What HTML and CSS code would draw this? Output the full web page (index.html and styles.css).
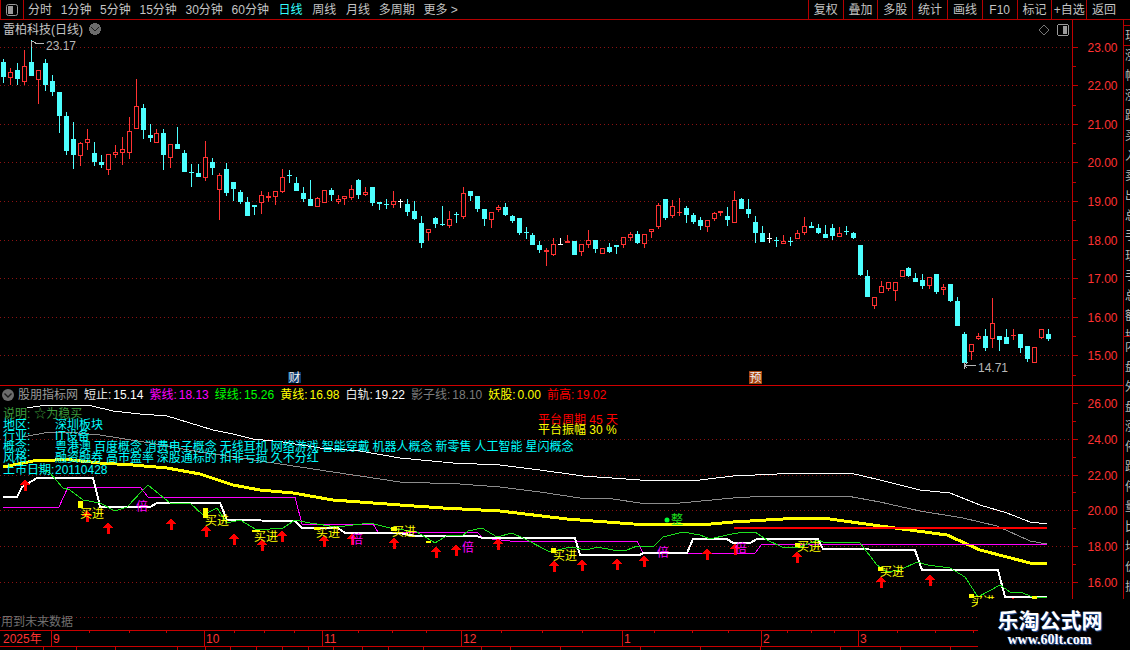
FILE: index.html
```html
<!DOCTYPE html>
<html lang="zh">
<head>
<meta charset="utf-8">
<title>雷柏科技(日线)</title>
<link rel="stylesheet" href="styles.css">
</head>
<body>
<div class="page">
  <header class="toolbar">
    <div class="panel-btn">
      <svg class="ico" viewBox="0 0 14 14"><rect class="ico-box" x="1.5" y="1.5" width="11" height="11" rx="2"/><rect class="ico-fill" x="3" y="3" width="5" height="8"/></svg>
    </div>
    <nav class="tabs">
      <span>分时</span><span>1分钟</span><span>5分钟</span><span>15分钟</span><span>30分钟</span><span>60分钟</span>
      <span class="tab-on">日线</span><span class="tab-w">周线</span><span class="tab-w">月线</span><span>多周期</span><span>更多&nbsp;&gt;</span>
    </nav>
    <div class="tools">
      <span>复权</span><span>叠加</span><span>多股</span><span>统计</span><span>画线</span><span>F10</span><span>标记</span><span>+自选</span><span>返回</span>
    </div>
  </header>

  <main class="board">
    <section class="pane price-pane">
      <svg class="chart" width="1072" height="366" viewBox="0 20 1072 366">
        <g class="grid">
          <line x1="0" x2="1072" y1="47.5" y2="47.5"/><line x1="0" x2="1072" y1="85.5" y2="85.5"/><line x1="0" x2="1072" y1="124.5" y2="124.5"/><line x1="0" x2="1072" y1="162.5" y2="162.5"/><line x1="0" x2="1072" y1="201.5" y2="201.5"/><line x1="0" x2="1072" y1="240.5" y2="240.5"/><line x1="0" x2="1072" y1="278.5" y2="278.5"/><line x1="0" x2="1072" y1="317.5" y2="317.5"/><line x1="0" x2="1072" y1="355.5" y2="355.5"/>
        </g>
        <g id="candles"></g>
        <path class="note-line" d="M31.5 47V41.5H34M34 42l3 2 3-1 4 1"/>
        <text class="note" x="46" y="49.5">23.17</text>
        <path class="note-line" d="M964.5 362V369M964.5 365.5H976M964.5 365.5l3-3M964.5 365.5l3 3"/>
        <text class="note" x="978" y="371.5">14.71</text>
        <rect class="tag-cai" x="288" y="372" width="13" height="11"/>
        <text class="tag-text" x="288.500" y="382">财</text>
        <rect class="tag-yu" x="749" y="371" width="13" height="13"/>
        <text class="tag-text" x="749.500" y="382">预</text>
        <path class="rule" d="M0 385.5H1072"/>
        <circle class="chev-bg" cx="95" cy="29" r="6"/>
        <path class="chev" d="M91.500 27.500l3.500 3.500 3.500-3.500"/>
        <path class="diamond" d="M1044 25l5 5-5 5-5-5z"/>
        <rect class="ico-box" x="1057.500" y="24.500" width="11" height="11" rx="2"/>
        <rect class="ico-fill" x="1063" y="26" width="4" height="8"/>
      </svg>
      <div class="stock-title">雷柏科技(日线)</div>
    </section>

    <aside class="axis price-axis">
      <svg width="51" height="366" viewBox="1072 20 51 366">
        <path class="axis-line" d="M1072.500 20V386M1072 47.500h6M1072 66.500h4M1072 85.500h6M1072 105.500h4M1072 124.500h6M1072 143.500h4M1072 162.500h6M1072 182.500h4M1072 201.500h6M1072 220.500h4M1072 240.500h6M1072 259.500h4M1072 278.500h6M1072 298.500h4M1072 317.500h6M1072 336.500h4M1072 355.500h6M1072 375.500h4"/>
        <text class="axis-text" x="1087.500" y="52">23.00</text>
        <text class="axis-text" x="1087.500" y="90">22.00</text>
        <text class="axis-text" x="1087.500" y="129">21.00</text>
        <text class="axis-text" x="1087.500" y="167">20.00</text>
        <text class="axis-text" x="1087.500" y="206">19.00</text>
        <text class="axis-text" x="1087.500" y="245">18.00</text>
        <text class="axis-text" x="1087.500" y="283">17.00</text>
        <text class="axis-text" x="1087.500" y="322">16.00</text>
        <text class="axis-text" x="1087.500" y="360">15.00</text>
        <path class="rule" d="M1072 385.500H1123"/>
      </svg>
    </aside>

    <aside class="side">
      <div class="side-a"></div>
      <div class="side-b"><p>现价</p></div>
      <div class="side-c"><p>涨幅涨跌买入卖出总手现手总额换手今开最高最低昨收市盈</p></div>
      <div class="side-d"><p>内盘外盘涨停跌停量比均价振幅金额</p></div>
    </aside>

    <section class="pane index-pane">
      <svg class="chart" width="1072" height="244" viewBox="0 386 1072 244">
        <defs><path id="up" d="M0 0L5 6H1.500V12H-1.500V6H-5Z"/></defs>
        <g class="grid">
          <line x1="0" x2="1072" y1="439.5" y2="439.5"/><line x1="0" x2="1072" y1="475.5" y2="475.5"/><line x1="0" x2="1072" y1="510.5" y2="510.5"/><line x1="0" x2="1072" y1="546.5" y2="546.5"/><line x1="0" x2="1072" y1="582.5" y2="582.5"/><line x1="0" x2="1072" y1="617.5" y2="617.5"/>
        </g>
        <polyline class="ln white-thin" points="27,408 40,406 72,405.500 92,406 113,411 140,414 167,416 190,423 213,430 233,434 253,439 283,442 320,448 360,451 400,458 453,463 500,465 540,470 583,476 640,480 700,480 733,476 800,473 850,473 880,480 920,490 950,493 980,505 1007,513 1030,522 1047,524"/>
        <polyline class="ln grey" points="22,437 50,432 67,432 100,435 150,443 200,452 267,462 333,472 400,482 460,484 500,487 540,492 580,498 613,499 640,503 680,503 733,498 767,496 847,496 880,502 920,511 963,518 997,526 1030,541 1047,544"/>
        <polyline class="ln yellow" points="3,467 13,465 33,461 67,459.500 100,463 133,465 167,468 200,474 233,485 260,490 293,493 333,500 400,505 443,508 500,511 567,519 633,524 700,525 733,522 800,518 830,519 880,526 947,535 980,550 1030,563 1047,564"/>
        <polyline class="ln magenta" points="3,507 59,507 68,487 140,487 148,497 295,497 302,524 373,524 378,532 477,532 483,538 510,541 637,541 643,553 755,553 762,544 1047,544"/>
        <polyline class="ln white" points="3,497 17,497 22,487 37,478 93,478 98,498 100,507 150,507 157,503 220,503 227,520 295,521 302,528 338,528 345,533 400,533 415,536 477,536 482,538 575,538 580,555 640,555 643,553 687,553 693,539 727,539 733,543 750,543 757,539 818,539 823,549 915,550 922,570 998,570 1005,597 1047,597"/>
        <polyline class="ln green" points="38,467 50,473 63,488 70,490 83,500 100,503 115,511 127,507 143,490 148,485 170,503 190,503 203,515 217,508 227,523 240,520 257,530 283,528 295,520 310,523 337,527 370,523 390,528 417,532 435,543 448,535 462,536 468,531 482,528 497,537 512,533 523,538 550,552 570,547 587,550 597,547 613,550 627,550 637,546 653,547 663,537 683,532 700,535 710,539 727,535 743,532 755,532 767,540 782,547 800,547 818,540 823,542 860,543 877,565 887,572 900,570 917,562 928,565 950,568 965,577 978,597 1000,585 1010,592 1020,592 1033,597 1047,597"/>
        <path class="ln red-bar" d="M734 528H1047"/>
        <g class="arrows">
          <use href="#up" x="25" y="479"/><use href="#up" x="87" y="510"/><use href="#up" x="108" y="522"/><use href="#up" x="171" y="518"/><use href="#up" x="206" y="525"/><use href="#up" x="234" y="533"/><use href="#up" x="262" y="539"/><use href="#up" x="282" y="530"/><use href="#up" x="324" y="535"/><use href="#up" x="352" y="533"/><use href="#up" x="394" y="537"/><use href="#up" x="436" y="546"/><use href="#up" x="456" y="544"/><use href="#up" x="498" y="538"/><use href="#up" x="554" y="560"/><use href="#up" x="582" y="559"/><use href="#up" x="617" y="558"/><use href="#up" x="644" y="555"/><use href="#up" x="707" y="548"/><use href="#up" x="735" y="543"/><use href="#up" x="797" y="551"/><use href="#up" x="881" y="576"/><use href="#up" x="930" y="574"/><use href="#up" x="1013" y="597"/>
        </g>
        <g class="blocks">
          <rect x="78" y="501" width="5" height="7"/><rect x="203" y="508" width="5" height="10"/><rect x="252" y="530" width="8" height="2"/><rect x="314" y="527" width="6" height="3"/><rect x="391" y="527" width="6" height="4"/><rect x="426" y="541" width="5" height="2"/><rect x="551" y="548" width="5" height="5"/><rect x="795" y="543" width="5" height="4"/><rect x="878" y="567" width="5" height="4"/><rect x="969" y="594" width="5" height="4"/><rect x="1032" y="596" width="5" height="3"/>
        </g>
        <g class="buy">
          <text x="80" y="518">买进</text><text x="205" y="525">买进</text><text x="254" y="541">买进</text><text x="316" y="537">买进</text><text x="392" y="536">买进</text><text x="553" y="560">买进</text><text x="797" y="551">买进</text><text x="880" y="576">买进</text><text x="971" y="606">买进</text>
        </g>
        <g class="bei">
          <text x="136" y="511">倍</text><text x="351" y="544">倍</text><text x="462" y="552">倍</text><text x="657" y="557">倍</text><text x="735" y="553">倍</text>
        </g>
        <circle class="dot" cx="667" cy="520" r="2.500"/>
        <text class="dot-text" x="671" y="524">整</text>
      </svg>

      <div class="legend">
        <svg class="legend-chev" viewBox="0 0 12 12"><circle class="chev-bg" cx="6" cy="6" r="6"/><path class="chev" d="M2.500 4.500l3.500 3.500 3.500-3.500"/></svg>
        <span class="c-name">股朋指标网</span>
        <span class="c-white"><i class="c-soft">短止:</i>15.14</span>
        <span class="c-mag">紫线:<b>18.13</b></span>
        <span class="c-green">绿线:<b>15.26</b></span>
        <span class="c-yellow">黄线:<b>16.98</b></span>
        <span class="c-white"><i class="c-soft">白轨:</i>19.22</span>
        <span class="c-grey">影子线:<b>18.10</b></span>
        <span class="c-yellow">妖股:<b>0.00</b></span>
        <span class="c-red">前高:<b>19.02</b></span>
      </div>

      <div class="info">
        <div class="info-note">说明: <span>☆为稳买</span></div>
        <div class="info-row"><span>地区:</span><span>深圳板块</span></div>
        <div class="info-row"><span>行业:</span><span>IT设备</span></div>
        <div class="info-row"><span>概念:</span><span>粤港澳 百度概念 消费电子概念 无线耳机 网络游戏 智能穿戴 机器人概念 新零售 人工智能 星闪概念</span></div>
        <div class="info-row"><span>风格:</span><span>融资融券 高市盈率 深股通标的 扣非亏损 久不分红</span></div>
        <div class="info-row"><span>上市日期:</span><span>20110428</span></div>
      </div>

      <div class="platform">
        <div class="c-red">平台周期 45 天</div>
        <div class="c-yellow">平台振幅 30 %</div>
      </div>

      <div class="future">用到未来数据</div>
    </section>

    <aside class="axis index-axis">
      <svg width="51" height="244" viewBox="1072 386 51 244">
        <path class="axis-line" d="M1072.500 386V630M1072 403.500h6M1072 421.500h4M1072 439.500h6M1072 457.500h4M1072 475.500h6M1072 492.500h4M1072 510.500h6M1072 528.500h4M1072 546.500h6M1072 564.500h4M1072 582.500h6"/>
        <text class="axis-text" x="1087.500" y="408">26.00</text>
        <text class="axis-text" x="1087.500" y="444">24.00</text>
        <text class="axis-text" x="1087.500" y="480">22.00</text>
        <text class="axis-text" x="1087.500" y="515">20.00</text>
        <text class="axis-text" x="1087.500" y="551">18.00</text>
        <text class="axis-text" x="1087.500" y="587">16.00</text>
      </svg>
    </aside>
  </main>

  <footer class="dates">
    <svg width="1130" height="20" viewBox="0 630 1130 20">
      <path class="date-line" d="M0 630.500H1130M0 646.500H1130"/>
      <path class="date-line" d="M51.500 630V646M204.500 630V646M322.500 630V646M461.500 630V646M622.500 630V646M761.500 630V646M858.500 630V646"/>
      <path class="date-line" d="M89.500 630v3M129.500 630v3M166.500 630v3M234.500 630v3M264.500 630v3M294.500 630v3M358.500 630v3M392.500 630v3M426.500 630v3M501.500 630v3M542.500 630v3M582.500 630v3M654.500 630v3M692.500 630v3M728.500 630v3M787.500 630v3M811.500 630v3M834.500 630v3M897.500 630v3M935.500 630v3M973.500 630v3"/>
      <path class="date-line" d="M43.500 646v4M76.500 646v4M115.500 646v4M177.500 646v4M205.500 646v4M230.500 646v4M256.500 646v4M282.500 646v4M308.500 646v4M333.500 646v4M362.500 646v4M388.500 646v4M423.500 646v4M481.500 646v4M510.500 646v4M560.500 646v4M640.500 646v4M700.500 646v4M760.500 646v4M840.500 646v4M900.500 646v4M950.500 646v4"/>
      <text class="date-text" x="3" y="643">2025年</text>
      <text class="date-text" x="53" y="643">9</text>
      <text class="date-text" x="206" y="643">10</text>
      <text class="date-text" x="324" y="643">11</text>
      <text class="date-text" x="463" y="643">12</text>
      <text class="date-text" x="624" y="643">1</text>
      <text class="date-text" x="763" y="643">2</text>
      <text class="date-text" x="860" y="643">3</text>
    </svg>
  </footer>

  <div class="watermark">
    <div class="wm-title">乐淘公式网</div>
    <div class="wm-url">www.60lt.com</div>
  </div>
</div>
<script src="chart.js"></script>
</body>
</html>
```

FILE: styles.css
```css
* { box-sizing: border-box; }
html, body { margin: 0; padding: 0; background: #000; }
body { font-family: "Liberation Sans", "Noto Sans CJK SC", sans-serif; font-size: 12px; overflow: hidden; }
svg { display: block; }
svg text { font-family: "Liberation Sans", "Noto Sans CJK SC", sans-serif; font-size: 12px; }

.page { position: relative; width: 1130px; height: 650px; display: flex; flex-direction: column; overflow: hidden; background: #000; }

.toolbar { flex: none; height: 20px; display: flex; align-items: stretch; border-bottom: 1px solid #b40000; color: #c4c4c4; }
.panel-btn { width: 24px; display: flex; align-items: center; justify-content: center; border-left: 1px solid #b40000; border-right: 1px solid #b40000; }
.ico { width: 14px; height: 14px; }
.ico-box { fill: none; stroke: #9a9a9a; }
.ico-fill { fill: #9a9a9a; }
.tabs { display: flex; align-items: center; gap: 8.7px; margin-left: 4px; padding-top: 1px; line-height: 18px; white-space: nowrap; }
.tab-on { color: #3ff; margin-left: 1px; }
.tab-w { margin-left: 1px; }
.tools { margin-left: auto; margin-right: 9px; display: flex; }
.tools span { width: 34.800px; border-left: 1px solid #b40000; text-align: center; line-height: 20px; white-space: nowrap; }

.board { flex: none; display: grid; grid-template-columns: 1072px 51px 7px; grid-template-rows: 366px 244px; }
.pane { position: relative; }
.price-pane { grid-column: 1; grid-row: 1; }
.index-pane { grid-column: 1; grid-row: 2; }
.price-axis { grid-column: 2; grid-row: 1; }
.index-axis { grid-column: 2; grid-row: 2; }

.chart { shape-rendering: crispEdges; }
.chart text { shape-rendering: auto; }
.grid line { stroke: #8c1212; stroke-width: 1; stroke-dasharray: 1 3; }
.axis-line { fill: none; stroke: #c00000; shape-rendering: crispEdges; }
.axis-text { fill: #ff3232; }
.rule { stroke: #d00000; fill: none; shape-rendering: crispEdges; }

.note { fill: #b8b8b8; }
.note-line { fill: none; stroke: #b8b8b8; }
.tag-cai { fill: #0c3a6c; }
.tag-yu { fill: #a8420c; }
.tag-text { fill: #f0f0f0; }
.chev-bg { fill: #6c6c6c; }
.chev { fill: none; stroke: #1c1c1c; stroke-width: 1.400; }
.diamond { fill: none; stroke: #777; shape-rendering: auto; }
.stock-title { position: absolute; left: 3px; top: 2px; line-height: 16px; color: #c4c4c4; white-space: nowrap; }

.ln { fill: none; }
.white-thin { stroke: #fff; stroke-width: 1; }
.grey { stroke: #8c8c8c; stroke-width: 1; }
.yellow { stroke: #ff0; stroke-width: 3; }
.magenta { stroke: #f0f; stroke-width: 1; }
.white { stroke: #fff; stroke-width: 2; }
.green { stroke: #1ee01e; stroke-width: 1; }
.red-bar { stroke: #f00; stroke-width: 2; }
.arrows use { fill: #f00; }
.blocks rect { fill: #ff0; }
.buy text { fill: #ff0; }
.bei text { fill: #f0f; }
.dot { fill: #0f3; shape-rendering: auto; }
.dot-text { fill: #1ee01e; }

.legend { position: absolute; left: 2px; top: 1px; height: 16px; display: flex; align-items: center; gap: 6px; white-space: nowrap; line-height: 16px; }
.legend-chev { width: 12px; height: 12px; margin-right: -2px; }
.legend i { font-style: normal; margin-right: 2px; }
.legend b { font-weight: normal; margin-left: 2px; }
.c-name { color: #9a9a9a; }
.c-white { color: #fff; }
.c-soft { color: #e8e8e8; }
.c-mag { color: #f0f; }
.c-green { color: #0f0; }
.c-yellow { color: #ff0; }
.c-grey { color: #7c7c7c; }
.c-red { color: #f00; }

.info { position: absolute; left: 3px; top: 22.500px; color: #0ff; line-height: 11.200px; white-space: nowrap; word-spacing: -0.4px; }
.info-note { color: #3c9c3c; }
.info-note span { margin-left: 1px; }
.info-row { display: flex; }
.info-row span:first-child { width: 52px; flex: none; }

.platform { position: absolute; left: 538px; top: 30px; line-height: 9.500px; white-space: nowrap; }

.future { position: absolute; left: 1px; bottom: 0; line-height: 16px; color: #707070; white-space: nowrap; }

.side { grid-column: 3; grid-row: 1 / span 2; height: 580px; border-left: 1px solid #b40000; overflow: hidden; color: #b8b8b8; display: flex; flex-direction: column; }
.side div { overflow: hidden; flex: none; border-bottom: 1px solid #b40000; }
.side p { margin: 0; width: 12px; margin-left: 1px; line-height: 20px; }
.side-a { height: 6px; }
.side-b { height: 20px; }
.side-c { height: 291px; }
.side-d { height: 263px; }

.dates { flex: none; height: 20px; }
.date-line { fill: none; stroke: #c80000; shape-rendering: crispEdges; }
.date-text { fill: #ff3232; }

.watermark { position: absolute; left: 978px; top: 599px; width: 152px; height: 51px; background: #000; padding-top: 8px; text-align: center; }
.wm-title { font-family: "Noto Sans CJK SC", sans-serif; font-weight: 700; font-size: 21px; line-height: 24px; color: #fff; text-shadow: 1px 1px 1px #2a5aa8; margin-left: -8px; }
.wm-url { font-family: "Liberation Serif", serif; font-weight: 700; font-size: 14px; line-height: 16px; margin-top: 1px; color: #fff; text-shadow: 1px 1px 1px #2a5aa8; margin-left: -9px; }
```

FILE: chart.js
```js
// t: c=cyan r=red w=white; wick top, body top, body bottom, wick bottom
var data = "c59,62,77,83 r68,72,78,85 c63,70,79,85 r50,66,82,85 c40,62,76,76 r70,70,80,104 c59,63,85,91 c75,81,92,96 c92,92,116,133 c112,116,151,155 c122,139,155,169 r142,143,156,166 r129,139,143,150 c142,153,162,166 c155,162,165,168 r154,154,170,175 r145,152,155,158 r137,149,153,165 r117,131,153,159 r79,106,129,129 c104,108,130,139 c124,135,138,142 r129,133,143,143 c129,133,155,170 r144,144,158,168 c127,144,149,149 c150,153,172,172 c164,172,172,187 c164,173,177,177 r141,157,178,181 c158,162,168,175 r173,175,190,220 c163,169,193,196 c182,182,189,201 c190,192,202,204 c197,202,216,216 c205,205,207,215 r191,195,203,214 r192,196,198,202 r191,191,197,205 r169,177,192,193 c170,175,175,183 c177,183,191,191 c187,193,199,202 c180,199,206,206 r197,198,207,207 r190,190,203,203 c188,190,195,201 r195,199,202,204 r196,196,199,205 r185,189,198,200 c179,180,195,199 r187,192,195,196 c187,187,203,206 c202,202,204,210 c199,204,204,209 r191,201,205,208 w199,201,201,208 c199,204,212,216 c201,211,219,220 c216,223,243,248 r229,229,233,241 c217,218,224,228 c206,224,225,226 r211,219,226,228 c212,214,214,223 r187,193,217,219 c191,191,196,201 c196,196,209,212 c209,209,219,226 r212,212,220,228 r205,207,210,212 c203,207,215,216 c215,216,221,223 c218,218,233,235 c227,232,232,239 c233,235,245,245 c241,245,250,253 r248,250,252,266 r238,244,255,256 w238,244,244,245 r235,241,243,243 c241,241,255,255 r244,244,252,256 r230,240,245,248 c240,240,249,253 r248,248,254,254 c243,247,252,253 c245,245,247,254 r237,237,245,248 r232,234,238,241 c231,234,243,244 r234,234,244,248 r229,229,232,238 r203,205,227,229 c199,199,218,220 r200,206,216,218 r198,212,212,216 c206,208,215,223 c213,215,222,224 c217,220,226,230 r220,220,227,232 r212,213,219,221 r211,211,213,216 c207,216,220,226 r191,200,223,223 c198,199,209,209 c199,209,214,218 c216,222,233,243 c226,233,242,242 w233,238,238,243 c237,240,240,247 r235,241,244,244 c237,241,242,246 r230,233,239,239 r217,226,233,235 c222,226,228,228 c224,228,233,234 c225,234,238,238 c224,228,236,240 r227,233,237,237 c226,231,231,235 c232,233,238,239 c245,245,275,276 c270,276,297,297 r297,297,306,309 r281,286,293,293 r282,282,289,291 r282,282,291,301 r270,270,277,277 c267,268,276,277 c273,278,282,282 c274,280,286,289 r277,277,286,289 c274,274,292,294 r284,287,290,295 c284,284,301,302 c297,301,326,326 c332,334,363,368 r344,344,352,360 r333,336,339,340 c329,336,348,351 r298,323,339,348 c336,336,340,351 c329,337,344,344 r329,335,335,340 c334,334,348,353 c346,346,359,362 r347,347,363,363 r329,329,338,339 c329,334,339,341".split(" ");
var NS = "http://www.w3.org/2000/svg";
var layer = document.getElementById("candles");
var COLORS = { c: "#4dffff", r: "#ff3232", w: "#ffffff" };

function shape(name, attrs) {
  var el = document.createElementNS(NS, name);
  for (var k in attrs) el.setAttribute(k, attrs[k]);
  layer.appendChild(el);
}

data.forEach(function (item, i) {
  var t = item.charAt(0);
  var v = item.slice(1).split(",").map(Number);
  var col = COLORS[t];
  var x = Math.round(3.3 + 6.963 * i);
  var top = v[1], bot = v[2];
  if (v[0] < top) shape("rect", { x: x, width: 1, fill: col, y: v[0], height: top - v[0] });
  if (v[3] > bot) shape("rect", { x: x, width: 1, fill: col, y: bot, height: v[3] - bot });
  if (bot - top < 2) {
    shape("rect", { x: x - 2, y: top, width: 5, height: t === "r" && bot - top >= 1 ? 2 : 1, fill: col });
  } else if (t === "r") {
    shape("rect", { x: x - 1.5, y: top + 0.5, width: 4, height: bot - top - 1, fill: "#000", stroke: col });
  } else {
    shape("rect", { x: x - 2, y: top, width: 5, height: bot - top, fill: col });
  }
});
```
